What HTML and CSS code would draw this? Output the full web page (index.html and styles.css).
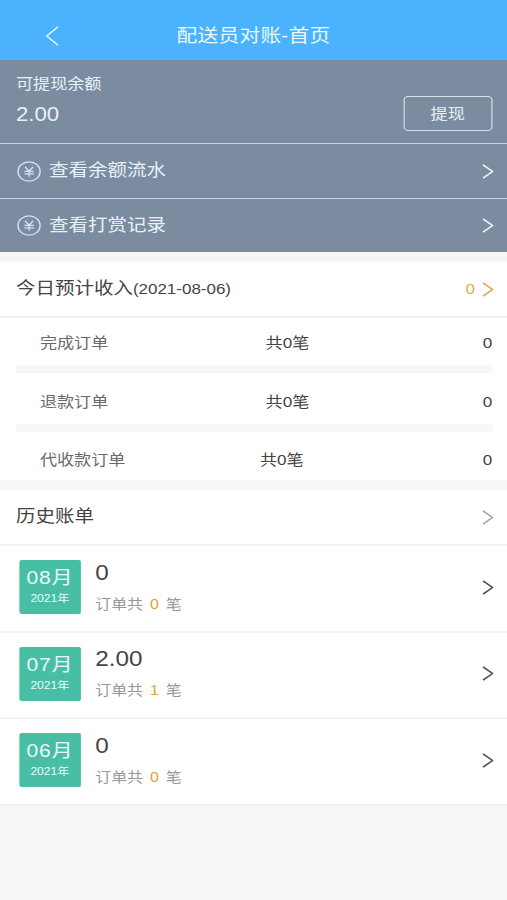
FILE: index.html
```html
<!DOCTYPE html>
<html lang="zh-CN">
<head>
<meta charset="utf-8">
<title>配送员对账-首页</title>
<link rel="stylesheet" href="styles.css">
</head>
<body>
<svg width="0" height="0" class="defs">
  <symbol id="next" viewBox="0 0 10 15"><path d="M.7 .8 9 7.5 .7 14.2"/></symbol>
  <symbol id="yen" viewBox="0 0 21 21"><circle cx="10.5" cy="10.5" r="9.7"/><path d="M7 5.8l3.5 4.4L14 5.8M6.4 10.4h8.2M6.4 12.8h8.2M10.5 10.2v5.6"/></symbol>
</svg>
<div class="page">
  <header class="bar">
    <svg class="back" viewBox="0 0 12 20"><path d="M11 .8 1 10l10 9.2"/></svg>
    <h1>配送员对账-首页</h1>
  </header>
  <section class="wallet">
    <div class="balance">
      <div>
        <div class="balance-label">可提现余额</div>
        <div class="balance-value">2.00</div>
      </div>
      <button class="withdraw">提现</button>
    </div>
    <div class="link"><svg class="yen"><use href="#yen"/></svg><span>查看余额流水</span><svg class="next"><use href="#next"/></svg></div>
    <div class="link"><svg class="yen"><use href="#yen"/></svg><span>查看打赏记录</span><svg class="next"><use href="#next"/></svg></div>
  </section>
  <section class="income">
    <div class="head">
      <h2>今日预计收入<small>(2021-08-06)</small></h2>
      <span class="total">0</span><svg class="next gold"><use href="#next"/></svg>
    </div>
    <div class="row"><span class="kind">完成订单</span><span class="count">共0笔</span><span>0</span></div>
    <div class="row"><span class="kind">退款订单</span><span class="count">共0笔</span><span>0</span></div>
    <div class="row last"><span class="kind">代收款订单</span><span class="count">共0笔</span><span>0</span></div>
  </section>
  <section class="history">
    <div class="head"><h2>历史账单</h2><svg class="next pale"><use href="#next"/></svg></div>
    <div class="bill">
      <div class="month"><b>08<i>月</i></b><span>2021年</span></div>
      <div class="sum"><strong>0</strong><p>订单共<em>0</em>笔</p></div>
      <svg class="next dark"><use href="#next"/></svg>
    </div>
    <div class="bill">
      <div class="month"><b>07<i>月</i></b><span>2021年</span></div>
      <div class="sum"><strong>2.00</strong><p>订单共<em>1</em>笔</p></div>
      <svg class="next dark"><use href="#next"/></svg>
    </div>
    <div class="bill">
      <div class="month"><b>06<i>月</i></b><span>2021年</span></div>
      <div class="sum"><strong>0</strong><p>订单共<em>0</em>笔</p></div>
      <svg class="next dark"><use href="#next"/></svg>
    </div>
  </section>
</div>
</body>
</html>
```
FILE: styles.css
```css
* { box-sizing: border-box; margin: 0; padding: 0; }
html, body { height: 100%; overflow: hidden; background: #f6f6f6; }
.defs { display: none; }
svg { fill: none; stroke: currentColor; flex: none; }

.page {
  width: 444.74px;
  height: 900px;
  transform: scaleX(1.14);
  transform-origin: 0 0;
  font-family: "Liberation Sans", "Noto Sans CJK SC", sans-serif;
  font-size: 15px;
  line-height: 20px;
  color: #444;
}
h1, h2 { font-weight: 400; }

.bar {
  display: flex;
  align-items: center;
  height: 60px;
  padding: 12px 40px 0;
  background: #4bb3fe;
  color: #e9f7ff;
}
.back { width: 12px; height: 20px; stroke-width: 1.3; }
.bar h1 { flex: 1; padding-right: 12px; text-align: center; font-size: 18.2px; letter-spacing: .2px; }

.wallet { background: #7b8ca1; color: #e9f0f6; }
.balance {
  display: flex;
  justify-content: space-between;
  height: 83px;
  padding: 14px 13px 0 14px;
}
.balance-value { font-size: 19.5px; line-height: 24px; margin-top: 8px; }
.withdraw {
  width: 78px;
  height: 35px;
  margin-top: 22px;
  border: 1.5px solid #d5e0e8;
  border-radius: 4px;
  background: none;
  color: inherit;
  font: inherit;
}
.link {
  display: flex;
  align-items: center;
  height: 54.5px;
  padding: 1px 12px 0 15px;
  border-top: 1px solid #c6d5e8;
  font-size: 17.1px;
}
.yen { width: 21px; height: 21px; margin-right: 7px; stroke-width: 1.2; color: #d5e4f2; }
.link span { flex: 1; }
.next { width: 10px; height: 15px; stroke-width: 1.6; }
.gold { color: #e3a94e; }
.pale { color: #a8a8a8; }
.dark { color: #555; }

.income { margin-top: 10px; background: #fff; }
.head {
  display: flex;
  align-items: center;
  height: 56px;
  padding: 0 12px 0 14px;
  border-bottom: 2px solid #f1f1f1;
}
.head h2 { flex: 1; font-size: 17.1px; }
.head small { font-size: 14.9px; }
.total { margin-right: 6px; color: #e3a94e; }

.row {
  display: grid;
  grid-template-columns: 198px 1fr auto;
  align-items: center;
  height: 59px;
  margin: 0 13px 0 14px;
  padding-left: 21px;
  border-bottom: 8px solid #f7f7f7;
}
.row:nth-child(2) { height: 55px; padding-top: 3px; }
.row:nth-child(3) { padding-top: 6px; }
.row.last { height: 48px; grid-template-columns: 193px 1fr auto; padding-top: 8px; border: 0; }
.kind { color: #6b6b6b; }

.history { margin-top: 10px; background: #fff; }
.bill {
  display: flex;
  align-items: center;
  height: 86.5px;
  padding: 0 12px 2px 17px;
  border-bottom: 2px solid #f2f2f2;
}
.month {
  width: 53.5px;
  height: 54px;
  padding-top: 8px;
  border-radius: 2px;
  background: #48bfa5;
  color: #e8fbf6;
  text-align: center;
}
.month b { display: block; font-weight: 400; font-size: 18.5px; line-height: 20px; letter-spacing: .7px; }
.month i { font-style: normal; }
.month span { display: block; font-size: 10.6px; line-height: 20px; }
.sum { flex: 1; padding-left: 13px; }
.sum strong { display: block; font-weight: 400; font-size: 21.3px; line-height: 28px; }
.sum p { margin-top: 5px; font-size: 14px; line-height: 24px; color: #999; }
.sum em { margin: 0 6px; font-style: normal; color: #e3a03a; }
```
